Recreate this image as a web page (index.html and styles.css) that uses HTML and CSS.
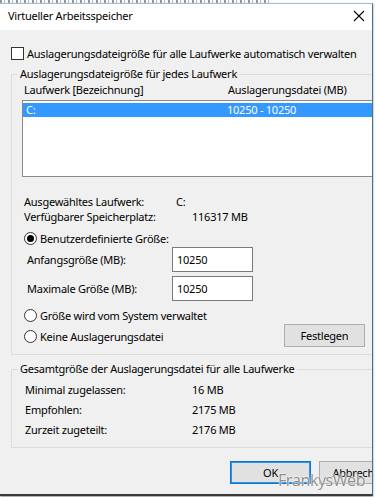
FILE: index.html
```html
<!DOCTYPE html>
<html lang="de">
<head>
<meta charset="utf-8">
<title>Virtueller Arbeitsspeicher</title>
<link rel="stylesheet" href="styles.css">
</head>
<body>
<div class="backdrop"></div>
<div class="window">
  <div class="titlebar">
    <span class="title">Virtueller Arbeitsspeicher</span>
    <svg class="close" width="12" height="12" viewBox="0 0 12 12" aria-hidden="true"><path d="M1 1L11 11M11 1L1 11" stroke="#000" stroke-width="1.1" fill="none"/></svg>
  </div>
  <div class="body">
    <div class="check-row"><span class="checkbox"></span><span>Auslagerungsdateigröße für alle Laufwerke automatisch verwalten</span></div>

    <fieldset class="group group-drive">
      <legend>Auslagerungsdateigröße für jedes Laufwerk</legend>
      <div class="group-body">
        <div class="cols"><span class="col1">Laufwerk [Bezeichnung]</span><span>Auslagerungsdatei (MB)</span></div>
        <div class="listbox">
          <div class="list-row selected"><span class="col1">C:</span><span>10250 - 10250</span></div>
        </div>
        <div class="info">
          <div class="info-row"><span class="lbl-a">Ausgewähltes Laufwerk:</span><span>C:</span></div>
          <div class="info-row"><span class="lbl-b">Verfügbarer Speicherplatz:</span><span>116317 MB</span></div>
        </div>
        <div class="radio-row first"><span class="radio checked"></span><span>Benutzerdefinierte Größe:</span></div>
        <div class="field-row first"><span class="field-lbl">Anfangsgröße (MB):</span><span class="input">10250</span></div>
        <div class="field-row"><span class="field-lbl">Maximale Größe (MB):</span><span class="input">10250</span></div>
        <div class="radio-row"><span class="radio"></span><span>Größe wird vom System verwaltet</span></div>
        <div class="last-row">
          <div class="radio-inline"><span class="radio"></span><span>Keine Auslagerungsdatei</span></div>
          <span class="btn btn-set">Festlegen</span>
        </div>
      </div>
    </fieldset>

    <fieldset class="group group-total">
      <legend>Gesamtgröße der Auslagerungsdatei für alle Laufwerke</legend>
      <div class="group-body totals">
        <div class="total-row"><span class="total-lbl">Minimal zugelassen:</span><span>16 MB</span></div>
        <div class="total-row"><span class="total-lbl">Empfohlen:</span><span>2175 MB</span></div>
        <div class="total-row"><span class="total-lbl">Zurzeit zugeteilt:</span><span>2176 MB</span></div>
      </div>
    </fieldset>

    <div class="buttons">
      <span class="btn btn-ok">OK</span>
      <span class="btn">Abbrechen</span>
    </div>
  </div>
</div>
<div class="watermark">FrankysWeb</div>
</body>
</html>
```
FILE: styles.css
```css
* { box-sizing: border-box; }

html, body {
  margin: 0;
  padding: 0;
}

body {
  position: relative;
  width: 378px;
  height: 497px;
  overflow: hidden;
  background: #ffffff;
  font-family: "Noto Sans", "Open Sans", sans-serif;
  font-size: 11px;
  letter-spacing: -0.24px;
  color: #000;
}

.backdrop {
  height: 3px;
  width: 270px;
  background: repeating-linear-gradient(90deg, #6a6a6a 0 2px, transparent 2px 4px, #9a9a9a 4px 5px, transparent 5px 8px);
  opacity: 0.7;
}

.window {
  width: 373px;
  height: 493px;
  overflow: hidden;
  border-top: 1px solid #9dbde0;
  border-right: 1px solid #4c6f96;
  border-bottom: 2px solid #3a3a3a;
  box-shadow: 0 1px 2px rgba(0, 0, 0, 0.45);
  display: flex;
  flex-direction: column;
}

.titlebar {
  height: 26px;
  flex: none;
  background: #fff;
  display: flex;
  align-items: center;
  justify-content: space-between;
  padding: 0 7px 3px 8px;
  font-size: 11px;
}

.close { display: block; }

.body {
  flex: 1;
  width: 411px;
  background: #f0f0f0;
  padding: 17px 11px 0 11px;
}

.check-row {
  display: flex;
  align-items: center;
  gap: 3px;
  height: 13px;
}

.checkbox {
  width: 13px;
  height: 13px;
  flex: none;
  background: #fff;
  border: 1px solid #333;
}

.group {
  margin: 6px 0 0 0;
  padding: 0;
  border: 1px solid #dcdcdc;
  min-width: 0;
}

.group legend {
  margin-left: 6px;
  padding: 0 2px;
  line-height: 16px;
}

.group-body {
  padding: 0 10px 7px 10px;
}

.cols {
  display: flex;
  height: 16px;
  line-height: 16px;
  padding-left: 2px;
}

.cols .col1 { width: 204px; }

.listbox {
  margin-top: 2px;
  height: 77px;
  background: #fff;
  border: 1px solid #8a8a8a;
  padding-top: 2px;
}

.list-row {
  display: flex;
  height: 14px;
  line-height: 14px;
  padding-left: 3px;
}

.list-row .col1 { width: 201px; }

.selected {
  background: #3399ff;
  color: #fff;
}

.info {
  margin-top: 17px;
  padding-left: 2px;
}

.info-row {
  display: flex;
  line-height: 15px;
  height: 15px;
}

.lbl-a { width: 152px; }
.lbl-b { width: 168px; }

.radio-row,
.radio-inline {
  display: flex;
  align-items: center;
  gap: 3px;
  height: 13px;
  padding-left: 2px;
}

.radio-row { margin-top: 8px; }

.radio {
  width: 13px;
  height: 13px;
  flex: none;
  border: 1px solid #333;
  border-radius: 50%;
  background: #fff;
  display: flex;
  align-items: center;
  justify-content: center;
}

.radio.checked::after {
  content: "";
  width: 7px;
  height: 7px;
  border-radius: 50%;
  background: #000;
}

.field-row {
  display: flex;
  align-items: center;
  margin-top: 4px;
  padding-left: 5px;
}

.field-row.first { margin-top: 2px; }

.field-lbl { width: 145px; }

.input {
  width: 81px;
  height: 25px;
  line-height: 23px;
  background: #fff;
  border: 1px solid #7a7a7a;
  padding-left: 4px;
}

.last-row {
  display: flex;
  align-items: flex-end;
  margin-top: 2px;
}

.radio-inline { margin-bottom: 4px; }

.btn {
  display: flex;
  align-items: center;
  justify-content: center;
  width: 81px;
  height: 23px;
  background: #e1e1e1;
  border: 1px solid #adadad;
}

.btn-set {
  margin-left: auto;
  margin-right: 24px;
}

.totals { padding-left: 13px; }

.group-total .group-body { padding-top: 3px; }

.total-row {
  display: flex;
  line-height: 20px;
  height: 20px;
}

.total-lbl { width: 167px; }

.buttons {
  display: flex;
  gap: 8px;
  margin-top: 13px;
  padding-left: 219px;
}

.btn-ok {
  border: 1px solid #0078d7;
  box-shadow: inset 0 0 0 1px #3c8fde;
}

.watermark {
  position: absolute;
  left: 278px;
  top: 469px;
  font-family: "Open Sans", "Noto Sans", sans-serif;
  font-weight: 400;
  font-size: 16px;
  letter-spacing: -0.4px;
  color: #8e8e8e;
  text-shadow: 0 0 2px #fff, 0 0 1px #fff;
}
```
